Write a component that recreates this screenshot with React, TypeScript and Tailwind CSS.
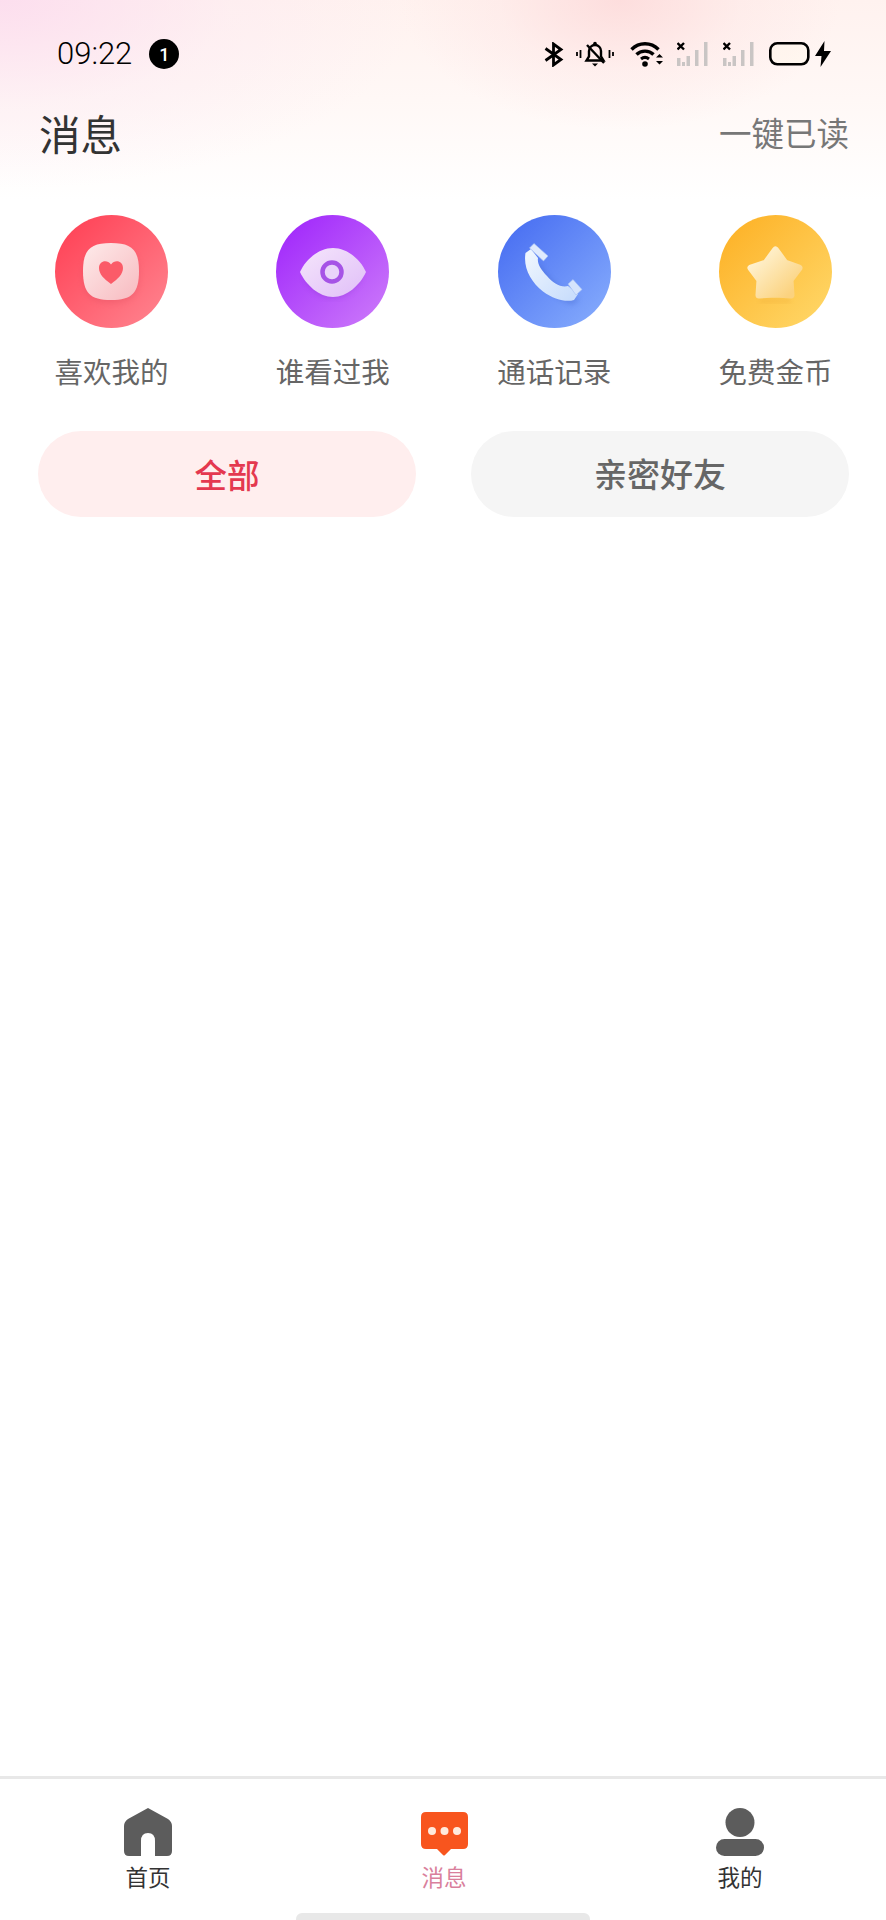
import React from "react";

const cjk = "font-['Noto_Sans_CJK_SC','Noto_Sans',sans-serif]";

function StatusIcons() {
  return (
    <div className="flex items-center">
      {/* bluetooth */}
      <svg width="20" height="25" viewBox="0 0 20 25" fill="none" stroke="#000" strokeWidth="2.8">
        <path d="M1.500 6.500 L17 17.500 L9.500 23 V2 L17 7.500 L1.500 18.500" />
      </svg>
      {/* muted bell with vibration ticks */}
      <svg width="38" height="26" viewBox="0 0 38 26" fill="none" className="ml-[12px]">
        <path d="M1 11v4M4.500 9v8M33.500 9v8M37 11v4" stroke="#000" strokeWidth="1.800" />
        <path d="M10.500 19.500h17l-2.500-4V10a6 6 0 0 0-12 0v5.500z" stroke="#000" strokeWidth="2.400" />
        <circle cx="19" cy="2.500" r="1.800" fill="#000" />
        <path d="M16 22.500h6l-3 3z" fill="#000" />
        <path d="M11 4l17 18" stroke="#000" strokeWidth="2.400" />
      </svg>
      {/* wifi */}
      <svg width="34" height="26" viewBox="0 0 34 26" fill="none" className="ml-[16px]">
        <path d="M1.500 8.500C9 .8 21 .8 28.500 8.500" stroke="#000" strokeWidth="3.400" />
        <path d="M6.500 13.500C11 9 19 9 23.500 13.500" stroke="#000" strokeWidth="3.400" />
        <path d="M11 18c2.500-2 5.500-2 8 0" stroke="#000" strokeWidth="3" />
        <circle cx="15" cy="23" r="2.800" fill="#000" />
        <path d="M26 16.500l3.500-3.500 3.500 3.500zM26 20l3.500 3.500 3.500-3.500z" fill="#000" />
      </svg>
      <Signal className="ml-[13px]" />
      <Signal className="ml-[15px]" />
      {/* battery */}
      <svg width="41" height="24" viewBox="0 0 41 24" fill="none" className="ml-[15px]">
        <rect x="1.300" y="1.300" width="38" height="21" rx="7" fill="#fffbe8" fillOpacity="0.3" stroke="#000" strokeWidth="2.600" />
      </svg>
      {/* bolt */}
      <svg width="16" height="26" viewBox="0 0 16 26" className="ml-[5px]">
        <path d="M9.500 0L0 15h6.500L5.500 26 16 10H9z" fill="#000" />
      </svg>
    </div>
  );
}

function Signal({ className }: { className: string }) {
  return (
    <svg width="31" height="26" viewBox="0 0 31 26" className={className}>
      <path d="M0.500 2l6.500 6.500M7 2l-6.500 6.500" stroke="#000" strokeWidth="2.400" />
      <rect x="0" y="17" width="3.500" height="8" fill="#c9c5c4" />
      <rect x="5" y="21" width="3" height="4" fill="#c9c5c4" />
      <rect x="9.500" y="15" width="3.500" height="10" fill="#c9c5c4" />
      <rect x="18" y="9" width="3.500" height="16" fill="#c9c5c4" />
      <rect x="27" y="1" width="3.500" height="24" fill="#c9c5c4" />
    </svg>
  );
}

function Defs({ id, from, to }: { id: string; from: string; to: string }) {
  return (
    <linearGradient id={id} x1="0.1" y1="0.1" x2="0.9" y2="0.9">
      <stop offset="0" stopColor={from} />
      <stop offset="1" stopColor={to} />
    </linearGradient>
  );
}

function HeartIcon() {
  return (
    <svg width="113" height="113" viewBox="0 0 113 113">
      <defs>
        <Defs id="c1" from="#ff4458" to="#ff7f8b" />
        <Defs id="i1" from="#fde6e6" to="#f8bfc4" />
        <filter id="b1"><feGaussianBlur stdDeviation="3" /></filter>
      </defs>
      <circle cx="56.500" cy="56.500" r="56.500" fill="url(#c1)" />
      <path d="M56 33C76 33 84 37 84 60C84 81 76 88 56 88C37 88 28 81 28 60C28 37 37 33 56 33Z" fill="#d94a5a" opacity="0.3" filter="url(#b1)" />
      <path d="M56 28C77 28 84 35 84 56C84 78 77 85 56 85C35 85 28 78 28 56C28 35 35 28 56 28Z" fill="url(#i1)" />
      <path d="M56 69C49 64 44 59 44 53C44 46 52 44 56 49.500C60 44 68 46 68 53C68 59 63 64 56 69Z" fill="#fb5b68" />
    </svg>
  );
}

function EyeIcon() {
  return (
    <svg width="113" height="113" viewBox="0 0 113 113">
      <defs>
        <Defs id="c2" from="#a22bfb" to="#c974fa" />
        <Defs id="i2" from="#f3e2fb" to="#e2c2f8" />
        <filter id="b2"><feGaussianBlur stdDeviation="3" /></filter>
      </defs>
      <circle cx="56.500" cy="56.500" r="56.500" fill="url(#c2)" />
      <path d="M28 62C40 48 72 48 86 62C72 90 40 90 28 62Z" fill="#7a25c0" opacity="0.3" filter="url(#b2)" />
      <path d="M24 57C30 44 43 33 57 33C71 33 84 44 90 57C84 70 71 82 57 82C43 82 30 70 24 57Z" fill="url(#i2)" />
      <circle cx="56" cy="57" r="9.500" fill="#e9d3fa" stroke="#a653e6" strokeWidth="4.500" />
    </svg>
  );
}

function PhoneIcon() {
  return (
    <svg width="113" height="113" viewBox="0 0 113 113">
      <defs>
        <Defs id="c3" from="#4a70f2" to="#82a8fc" />
        <Defs id="i3" from="#edf5fe" to="#cadefc" />
        <filter id="b3"><feGaussianBlur stdDeviation="2.500" /></filter>
      </defs>
      <circle cx="56.500" cy="56.500" r="56.500" fill="url(#c3)" />
      <path d="M34 52C38 68 56 84 74 90L82 85C64 76 50 62 42 48Z" fill="#3a5fc8" opacity="0.3" filter="url(#b3)" />
      <path d="M27.500 38C25 53 33 67 45 76.500C56 84.500 68 87.500 76 85L80 79L70 71C63 73 55 68 49 61C43 55 39 49 40 43L33 34Z" fill="url(#i3)" />
      <path d="M31.500 33L36 28.500L50 41L45.500 46Z" fill="#dfeafd" stroke="#a4bff3" strokeWidth="0.600" strokeLinejoin="round" />
      <path d="M70 69L75 64.500L84 74.500L78 80Z" fill="#d6e4fc" stroke="#a4bff3" strokeWidth="0.600" strokeLinejoin="round" />
    </svg>
  );
}

function StarIcon() {
  return (
    <svg width="113" height="113" viewBox="0 0 113 113">
      <defs>
        <Defs id="c4" from="#fdb329" to="#ffd564" />
        <Defs id="i4" from="#fff3d4" to="#fbd27e" />
        <filter id="b4"><feGaussianBlur stdDeviation="2" /></filter>
      </defs>
      <circle cx="56.500" cy="56.500" r="56.500" fill="url(#c4)" />
      <path d="M42 84L71 84L72 88L40 88Z" fill="#e8a530" opacity="0.3" filter="url(#b4)" />
      <path
        d="M56.500 35L66 48L80 53L71 65L72 80L56.500 79L40 80L41 65L32 53L47 48Z"
        fill="url(#i4)"
        stroke="url(#i4)"
        strokeWidth="7"
        strokeLinejoin="round"
      />
    </svg>
  );
}

function Shortcut({ icon, label }: { icon: React.ReactNode; label: string }) {
  return (
    <div className="flex w-[113px] flex-col items-center">
      {icon}
      <div className="mt-[25px] h-[38px] text-[28.5px] leading-[36px] whitespace-nowrap text-[#666666]">{label}</div>
    </div>
  );
}

function HomeGlyph() {
  return (
    <svg width="48" height="48" viewBox="0 0 48 48">
      <path
        d="M24 0L44 11Q48 14 48 18V43Q48 48 43 48H31V33Q31 25 24 25Q17 25 17 33V48H5Q0 48 0 43V18Q0 14 4 11Z"
        fill="#5c5c5c"
      />
    </svg>
  );
}

function MsgGlyph() {
  return (
    <svg width="47" height="44" viewBox="0 0 47 44">
      <path
        d="M5 0H42Q47 0 47 5V32Q47 37 42 37H30L24 43Q23 44 22 43L16 37H5Q0 37 0 32V5Q0 0 5 0Z"
        fill="#f8551e"
      />
      <circle cx="11" cy="19" r="4" fill="#ffeadd" />
      <circle cx="23.500" cy="19" r="4" fill="#ffeadd" />
      <circle cx="36" cy="19" r="4" fill="#ffeadd" />
    </svg>
  );
}

function MeGlyph() {
  return (
    <svg width="48" height="48" viewBox="0 0 48 48">
      <circle cx="24" cy="14.500" r="14.500" fill="#5c5c5c" />
      <rect x="0" y="31" width="48" height="17" rx="8.500" fill="#5c5c5c" />
    </svg>
  );
}

function Tab({ icon, label, active }: { icon: React.ReactNode; label: string; active?: boolean }) {
  return (
    <div className="flex flex-col items-center">
      <div className="flex h-[48px] items-end">{icon}</div>
      <div className={`mt-[5px] text-[22.5px] leading-[30px] ${active ? "text-[#d9809c]" : "text-[#333333]"}`}>{label}</div>
    </div>
  );
}

export default function App() {
  return (
    <div className={`relative flex h-[1920px] w-full flex-col overflow-hidden bg-white ${cjk}`}>
      <div className="absolute inset-x-0 top-0 h-[200px] bg-[radial-gradient(ellipse_220px_130px_at_620px_0px,rgba(253,218,218,0.85)_0%,rgba(253,225,225,0.35)_55%,rgba(255,255,255,0)_100%),radial-gradient(ellipse_420px_190px_at_0px_0px,rgba(252,220,238,0.9)_0%,rgba(252,232,242,0.4)_55%,rgba(255,255,255,0)_100%),linear-gradient(to_bottom,#fff2ef_0%,#fff8f6_50%,#ffffff_100%)]" />

      <div className="relative flex h-[108px] items-center">
        <div className="flex w-full items-center justify-between pr-[55px] pl-[57px]">
          <div className="flex items-center">
            <span className="font-['Roboto',sans-serif] text-[31px] leading-[36px] font-light text-black">09:22</span>
            <span className="ml-[17px] flex h-[30px] w-[30px] items-center justify-center rounded-full bg-black font-['Roboto',sans-serif] text-[18px] font-medium text-white">
              1
            </span>
          </div>
          <StatusIcons />
        </div>
      </div>

      <div className="relative flex h-[52px] items-center justify-between pr-[37px] pl-[39px]">
        <span className="relative -top-[1px] text-[41.5px] leading-[52px] text-[#333333]">消息</span>
        <span className="relative -top-[2px] text-[32.5px] leading-[52px] text-[#777777]">一键已读</span>
      </div>

      <div className="relative mt-[55px] flex justify-between pr-[54px] pl-[55px]">
        <Shortcut icon={<HeartIcon />} label="喜欢我的" />
        <Shortcut icon={<EyeIcon />} label="谁看过我" />
        <Shortcut icon={<PhoneIcon />} label="通话记录" />
        <Shortcut icon={<StarIcon />} label="免费金币" />
      </div>

      <div className="relative mt-[40px] flex gap-[55px] pr-[37px] pl-[38px]">
        <div className="flex h-[86px] flex-1 items-center justify-center rounded-full bg-[#ffeeee] text-[32.5px] font-medium text-[#e4384f]">
          全部
        </div>
        <div className="flex h-[86px] flex-1 items-center justify-center rounded-full bg-[#f5f5f5] text-[33px] font-medium text-[#666666]">
          亲密好友
        </div>
      </div>

      <div className="flex-1" />

      <div className="grid h-[144px] grid-cols-[repeat(3,296px)] border-t-[3px] border-[#e8e8e8] pt-[29px]">
        <Tab icon={<HomeGlyph />} label="首页" />
        <Tab icon={<MsgGlyph />} label="消息" active />
        <Tab icon={<MeGlyph />} label="我的" />
      </div>

      <div className="absolute bottom-0 left-[296px] h-[7px] w-[294px] rounded-t-[6px] bg-[#e8e8e8]" />
    </div>
  );
}
